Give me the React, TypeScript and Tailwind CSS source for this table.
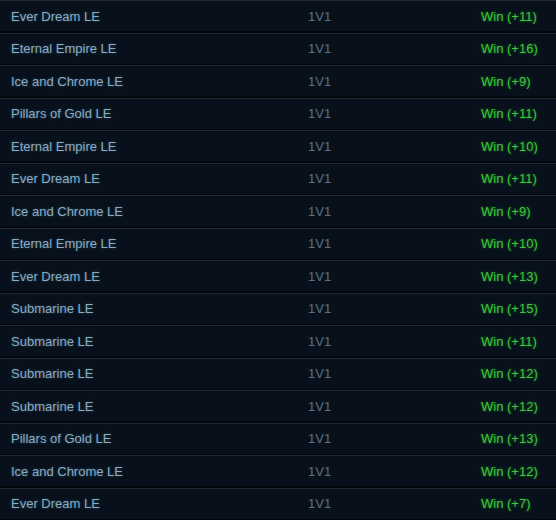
import React from "react";

const rows: [string, string][] = [
  ["Ever Dream LE", "+11"],
  ["Eternal Empire LE", "+16"],
  ["Ice and Chrome LE", "+9"],
  ["Pillars of Gold LE", "+11"],
  ["Eternal Empire LE", "+10"],
  ["Ever Dream LE", "+11"],
  ["Ice and Chrome LE", "+9"],
  ["Eternal Empire LE", "+10"],
  ["Ever Dream LE", "+13"],
  ["Submarine LE", "+15"],
  ["Submarine LE", "+11"],
  ["Submarine LE", "+12"],
  ["Submarine LE", "+12"],
  ["Pillars of Gold LE", "+13"],
  ["Ice and Chrome LE", "+12"],
  ["Ever Dream LE", "+7"],
];

export default function App() {
  return (
    <div
      className="w-[556px] h-[520px] overflow-hidden bg-[#03070c] flex flex-col"
      style={{ fontFamily: '"Liberation Sans", Arial, sans-serif' }}
    >
      {rows.map(([map, pts], i) => (
        <div
          key={i}
          className="h-[31px] shrink-0 mb-[1.5px] border-t border-[#1e2a36] bg-[#08111b] flex items-center pt-[1px] text-[13px]"
        >
          <div className="w-[308px] pl-[11px] text-[#88acc4] [text-shadow:0_0_3px_rgba(120,170,210,0.35)]">
            {map}
          </div>
          <div className="w-[173px] text-[#587284]">1V1</div>
          <div className="text-[#3cc836] [text-shadow:0_0_3px_rgba(60,220,60,0.45)]">
            Win ({pts})
          </div>
        </div>
      ))}
    </div>
  );
}
